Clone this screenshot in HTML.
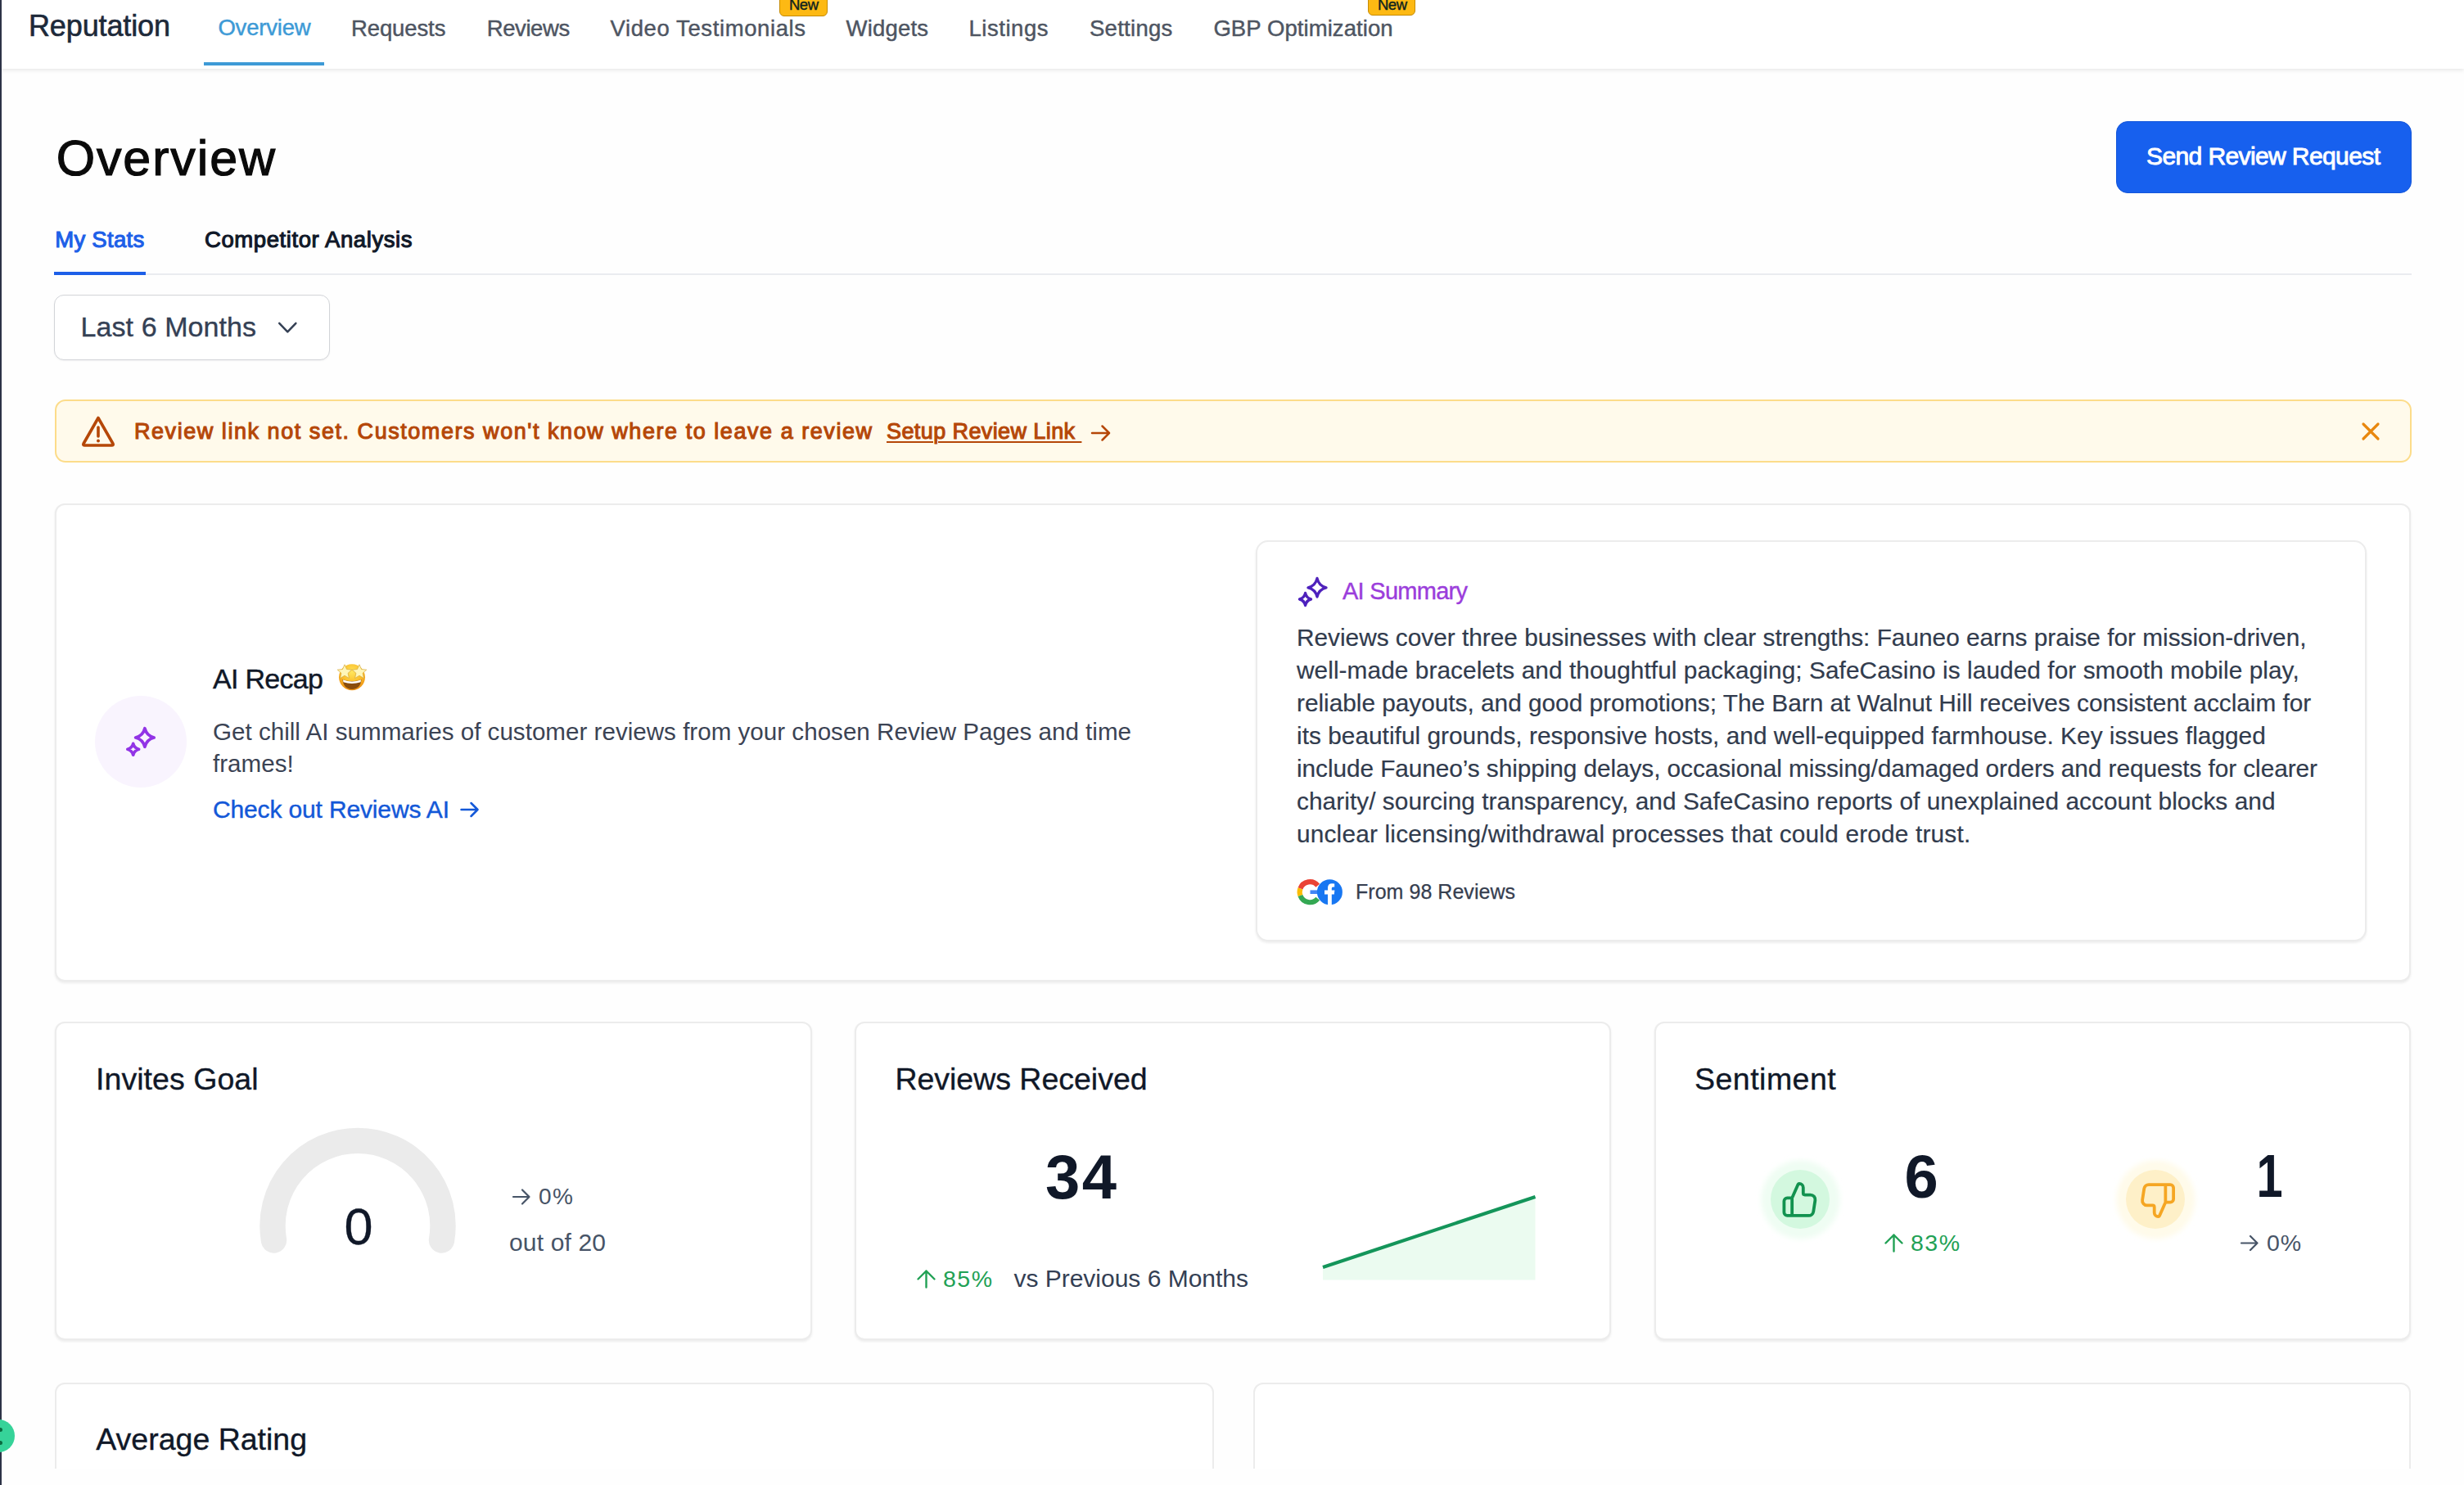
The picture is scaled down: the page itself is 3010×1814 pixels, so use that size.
<!DOCTYPE html>
<html><head><meta charset="utf-8"><title>Reputation Overview</title>
<style>
html,body{margin:0;padding:0;width:3010px;height:1814px;overflow:hidden;background:#fefefe;}
body{position:relative;font-family:"Liberation Sans", sans-serif;}
.t{position:absolute;white-space:pre;line-height:1;}
.a{position:absolute;box-sizing:border-box;}
svg{position:absolute;overflow:visible;}
</style></head><body>
<!-- left dark border -->
<div class="a" style="left:0;top:0;width:2px;height:1814px;background:#2d3347;z-index:5"></div>
<!-- header -->
<div class="a" style="left:0;top:0;width:3010px;height:84px;background:#fff;box-shadow:0 2px 5px rgba(0,0,0,0.09);"></div>
<div class="a" style="left:249px;top:76px;width:147px;height:4px;background:#3d9ad6;"></div>
<div class="a" style="left:952px;top:-8px;width:59px;height:27.5px;background:#fdb913;border:1.5px solid #c58b05;border-radius:6px;"></div>
<div class="a" style="left:1671px;top:-8px;width:57.5px;height:27px;background:#fdb913;border:1.5px solid #c58b05;border-radius:6px;"></div>

<!-- send button -->
<div class="a" style="left:2585px;top:148px;width:361px;height:88px;background:#1760ee;border-radius:14px;border:1px solid #1456da;"></div>

<!-- tabs -->
<div class="a" style="left:66px;top:334px;width:2880px;height:2px;background:#eaecf0;"></div>
<div class="a" style="left:66px;top:332px;width:112px;height:4px;background:#1d5fe8;"></div>

<!-- dropdown -->
<div class="a" style="left:66px;top:360px;width:337px;height:80px;border:1.6px solid #d2d4d8;border-radius:12px;background:#fff;box-shadow:0 1px 2px rgba(16,24,40,0.05);"></div>
<svg style="left:339px;top:389px" width="24" height="20" viewBox="0 0 24 20"><path d="M2.2 5.8 L12.3 16.4 L22.4 5.8" fill="none" stroke="#344054" stroke-width="2.5" stroke-linecap="round" stroke-linejoin="round"/></svg>

<!-- alert -->
<div class="a" style="left:67px;top:488px;width:2879px;height:77px;border:2px solid #fcdc8a;border-radius:13px;background:#fffaeb;"></div>
<svg style="left:98px;top:507px" width="44" height="40" viewBox="0 0 44 40"><path d="M22 3.5 L40 35 Q41 37 38.5 37 L5.5 37 Q3 37 4 35 Z" fill="none" stroke="#b54708" stroke-width="3.6" stroke-linejoin="round"/><path d="M22 15 V26" stroke="#b54708" stroke-width="3.6" stroke-linecap="round"/><circle cx="22" cy="31.5" r="2" fill="#b54708"/></svg>
<svg style="left:1331px;top:517px" width="28" height="24" viewBox="0 0 28 24"><path d="M3 12 H24 M15.5 3.5 L24 12 L15.5 20.5" fill="none" stroke="#b54708" stroke-width="2.5" stroke-linecap="round" stroke-linejoin="round"/></svg>
<svg style="left:2884px;top:515px" width="24" height="24" viewBox="0 0 24 24"><path d="M3 3 L21 21 M21 3 L3 21" fill="none" stroke="#e8870e" stroke-width="3.2" stroke-linecap="round"/></svg>

<!-- AI recap card -->
<div class="a" style="left:67px;top:615px;width:2878px;height:584px;border:2px solid #ececec;border-radius:12px;background:#fff;box-shadow:0 2px 3px rgba(0,0,0,0.07);"></div>
<div class="a" style="left:116px;top:850px;width:112px;height:112px;border-radius:50%;background:#f9f4fe;"></div>
<svg style="left:150px;top:883px" width="44" height="44" viewBox="0 0 44 44">
<path d="M26.90 6.70 Q29.16 15.74 38.20 18.00 Q29.16 20.26 26.90 29.30 Q24.64 20.26 15.60 18.00 Q24.64 15.74 26.90 6.70 Z" fill="none" stroke="#9234e6" stroke-width="3.7" stroke-linejoin="round"/>
<path d="M12.70 25.40 Q14.08 30.92 19.60 32.30 Q14.08 33.68 12.70 39.20 Q11.32 33.68 5.80 32.30 Q11.32 30.92 12.70 25.40 Z" fill="none" stroke="#9234e6" stroke-width="3.7" stroke-linejoin="round"/>
</svg>
<!-- emoji star-struck -->
<svg style="left:411px;top:809px" width="38" height="38" viewBox="0 0 38 38">
<defs><radialGradient id="eg" cx="50%" cy="30%" r="70%"><stop offset="0" stop-color="#ffe65c"/><stop offset="0.55" stop-color="#fbbf2c"/><stop offset="1" stop-color="#ec8f12"/></radialGradient></defs>
<circle cx="19" cy="18.3" r="16" fill="url(#eg)"/>
<path d="M7.5 21 Q19 25.5 30.5 21 Q29.5 32.5 19 33 Q8.5 32.5 7.5 21 Z" fill="#8a4d0c"/>
<path d="M8 21.2 Q19 25.6 30 21.2 L29.6 24.2 Q19 27.6 8.4 24.2 Z" fill="#ffffff"/>
<path d="M10.00 2.80 L12.53 8.52 L18.75 9.16 L14.09 13.33 L15.41 19.44 L10.00 16.30 L4.59 19.44 L5.91 13.33 L1.25 9.16 L7.47 8.52 Z" fill="#fff6b8" stroke="#d6a73a" stroke-width="0.7" stroke-linejoin="round"/>
<path d="M28.00 2.80 L30.53 8.52 L36.75 9.16 L32.09 13.33 L33.41 19.44 L28.00 16.30 L22.59 19.44 L23.91 13.33 L19.25 9.16 L25.47 8.52 Z" fill="#fff6b8" stroke="#d6a73a" stroke-width="0.7" stroke-linejoin="round"/>
</svg>
<svg style="left:560px;top:976px" width="28" height="26" viewBox="0 0 28 26"><path d="M3.5 13 H23.5 M15.5 5 L23.5 13 L15.5 21" fill="none" stroke="#1358d8" stroke-width="2.5" stroke-linecap="round" stroke-linejoin="round"/></svg>

<!-- AI summary card -->
<div class="a" style="left:1534px;top:660px;width:1357px;height:490px;border:2px solid #ececec;border-radius:15px;background:#fff;box-shadow:0 2px 3px rgba(0,0,0,0.07);"></div>
<svg style="left:1582px;top:702px" width="42" height="42" viewBox="0 0 42 42">
<defs><linearGradient id="sg" x1="0" y1="1" x2="1" y2="0"><stop offset="0" stop-color="#4a1fc0"/><stop offset="1" stop-color="#5324b8"/></linearGradient></defs>
<path d="M27 4.5 Q29 13.5 38 15.8 Q29 18 27 27 Q25 18 16 15.8 Q25 13.5 27 4.5 Z" fill="none" stroke="url(#sg)" stroke-width="3.4" stroke-linejoin="round"/>
<path d="M12.6 22.5 Q13.8 28.5 19.5 30 Q13.8 31.5 12.6 37.5 Q11.4 31.5 5.5 30 Q11.4 28.5 12.6 22.5 Z" fill="none" stroke="url(#sg)" stroke-width="3.4" stroke-linejoin="round"/>
</svg>
<!-- google + facebook -->
<svg style="left:1583px;top:1073px" width="58" height="34" viewBox="0 0 58 34">
<g transform="translate(17.2 16.7)">
<path d="M9.58 -8.03 A12.5 12.5 0 0 0 -11.75 -4.28" fill="none" stroke="#ea4335" stroke-width="6.2"/>
<path d="M-11.75 -4.28 A12.5 12.5 0 0 0 -11.75 4.28" fill="none" stroke="#fbbc05" stroke-width="6.2"/>
<path d="M-11.75 4.28 A12.5 12.5 0 0 0 9.58 8.03" fill="none" stroke="#34a853" stroke-width="6.2"/>
<rect x="0.3" y="-2.3" width="10" height="4.6" fill="#4285f4"/>
</g>
<circle cx="41.4" cy="16.7" r="15.5" fill="#1877f2"/>
<path d="M39 34 V19.5 H35 V14.5 H39 V11.5 Q39 6.2 44.3 6.2 Q46 6.2 47.2 6.5 V10.5 H45.2 Q43.8 10.5 43.8 12 V14.5 H47.4 L46.8 19.5 H43.8 V34 Z" fill="#fff"/>
</svg>

<!-- stats cards -->
<div class="a" style="left:67px;top:1248px;width:925px;height:389px;border:2px solid #ececec;border-radius:12px;background:#fff;box-shadow:0 2px 3px rgba(0,0,0,0.07);"></div>
<div class="a" style="left:1044px;top:1248px;width:924px;height:389px;border:2px solid #ececec;border-radius:12px;background:#fff;box-shadow:0 2px 3px rgba(0,0,0,0.07);"></div>
<div class="a" style="left:2021px;top:1248px;width:924px;height:389px;border:2px solid #ececec;border-radius:12px;background:#fff;box-shadow:0 2px 3px rgba(0,0,0,0.07);"></div>
<svg style="left:0;top:0" width="3010" height="1814" viewBox="0 0 3010 1814">
<path d="M334.5 1515 A104 104 0 1 1 539.5 1515" fill="none" stroke="#ebebeb" stroke-width="31.4" stroke-linecap="round"/>
<!-- arrows small -->
<path d="M627 1462 H646.5 M638 1453.5 L646.5 1462 L638 1470.5" fill="none" stroke="#475467" stroke-width="2.2" stroke-linecap="round" stroke-linejoin="round"/>
<path d="M1131.5 1572.5 V1552.5 M1121.5 1562.5 L1131.5 1552.5 L1141.5 1562.5" fill="none" stroke="#22a155" stroke-width="2.4" stroke-linecap="round" stroke-linejoin="round"/>
<path d="M2313.5 1528.5 V1508.5 M2303.5 1518.5 L2313.5 1508.5 L2323.5 1518.5" fill="none" stroke="#22a155" stroke-width="2.4" stroke-linecap="round" stroke-linejoin="round"/>
<path d="M2738 1518.5 H2757.5 M2749 1510 L2757.5 1518.5 L2749 1527" fill="none" stroke="#475467" stroke-width="2.2" stroke-linecap="round" stroke-linejoin="round"/>
<!-- chart -->
<path d="M1616 1548 L1875.5 1462 L1875.5 1563.5 L1616 1563.5 Z" fill="#ebfbf0"/>
<path d="M1616 1548 L1875.5 1462" fill="none" stroke="#14955a" stroke-width="4.2"/>
<!-- thumbs -->
<circle cx="2199.5" cy="1465.5" r="48" fill="#effdf3" filter="url(#blur)"/>
<circle cx="2199" cy="1465" r="36" fill="#d3f8df"/>
<circle cx="2633.5" cy="1465.5" r="48" fill="#fffbea" filter="url(#blur)"/>
<circle cx="2633" cy="1465" r="36" fill="#fef0c8"/>
<defs><filter id="blur" x="-30%" y="-30%" width="160%" height="160%"><feGaussianBlur stdDeviation="3"/></filter></defs>
<g transform="translate(2175.5 1442) scale(1.95)"><path d="M7 22V11M2 13v7a2 2 0 0 0 2 2h13.43a3 3 0 0 0 2.96-2.54l1.08-7A3 3 0 0 0 18.5 9H15a1 1 0 0 1-1-1V4.47A2.47 2.47 0 0 0 11.53 2a.81.81 0 0 0-.75.49L7.26 10.41a1 1 0 0 1-.91.59H4a2 2 0 0 0-2 2Z" fill="none" stroke="#12924f" stroke-width="1.95" stroke-linecap="round" stroke-linejoin="round"/></g>
<g transform="translate(2659 1490) scale(-1.95 -1.95) translate(0 0)"><path d="M7 22V11M2 13v7a2 2 0 0 0 2 2h13.43a3 3 0 0 0 2.96-2.54l1.08-7A3 3 0 0 0 18.5 9H15a1 1 0 0 1-1-1V4.47A2.47 2.47 0 0 0 11.53 2a.81.81 0 0 0-.75.49L7.26 10.41a1 1 0 0 1-.91.59H4a2 2 0 0 0-2 2Z" fill="none" stroke="#f5a623" stroke-width="1.95" stroke-linecap="round" stroke-linejoin="round"/></g>
</svg>

<!-- bottom cards (clipped) -->
<div class="a" style="left:0;top:0;width:3010px;height:1794px;overflow:hidden;pointer-events:none;">
<div class="a" style="left:67px;top:1689px;width:1416px;height:300px;border:2px solid #ececec;border-radius:12px;background:#fff;"></div>
<div class="a" style="left:1531px;top:1689px;width:1414px;height:300px;border:2px solid #ececec;border-radius:12px;background:#fff;"></div>
</div>
<!-- green help bubble -->
<div class="a" style="left:-22.5px;top:1733.7px;width:40.4px;height:40.4px;border-radius:50%;background:#36d399;z-index:6"></div>
<div class="a" style="left:-2px;top:1743.5px;width:5px;height:5px;border-radius:50%;background:#0b6b40;z-index:7"></div>
<div class="a" style="left:-2px;top:1759.5px;width:5px;height:5px;border-radius:50%;background:#0b6b40;z-index:7"></div>

<div class=t style="left:35.0px;top:13.5px;font-size:36px;font-weight:400;color:#1d2939;letter-spacing:-0.127px;-webkit-text-stroke:0.6px #1d2939;">Reputation</div>
<div class=t style="left:266.4px;top:19.7px;font-size:27.5px;font-weight:400;color:#3d9ad6;letter-spacing:-0.201px;-webkit-text-stroke:0.45px #3d9ad6;">Overview</div>
<div class=t style="left:429.0px;top:21.3px;font-size:27.5px;font-weight:400;color:#4e5562;letter-spacing:-0.112px;-webkit-text-stroke:0.45px #4e5562;">Requests</div>
<div class=t style="left:594.7px;top:21.3px;font-size:27.5px;font-weight:400;color:#4e5562;letter-spacing:-0.404px;-webkit-text-stroke:0.45px #4e5562;">Reviews</div>
<div class=t style="left:745.5px;top:21.3px;font-size:27.5px;font-weight:400;color:#4e5562;letter-spacing:0.600px;-webkit-text-stroke:0.45px #4e5562;">Video Testimonials</div>
<div class=t style="left:1033.5px;top:21.3px;font-size:27.5px;font-weight:400;color:#4e5562;letter-spacing:0.193px;-webkit-text-stroke:0.45px #4e5562;">Widgets</div>
<div class=t style="left:1183.5px;top:21.3px;font-size:27.5px;font-weight:400;color:#4e5562;letter-spacing:0.536px;-webkit-text-stroke:0.45px #4e5562;">Listings</div>
<div class=t style="left:1331.0px;top:21.3px;font-size:27.5px;font-weight:400;color:#4e5562;letter-spacing:0.275px;-webkit-text-stroke:0.45px #4e5562;">Settings</div>
<div class=t style="left:1482.4px;top:21.3px;font-size:27.5px;font-weight:400;color:#4e5562;letter-spacing:0.076px;-webkit-text-stroke:0.45px #4e5562;">GBP Optimization</div>
<div class=t style="left:964.0px;top:-3.0px;font-size:18.5px;font-weight:400;color:#10231f;letter-spacing:-0.508px;-webkit-text-stroke:0.4px #10231f;">New</div>
<div class=t style="left:1683.0px;top:-3.0px;font-size:18.5px;font-weight:400;color:#10231f;letter-spacing:-0.508px;-webkit-text-stroke:0.4px #10231f;">New</div>
<div class=t style="left:68.7px;top:162.9px;font-size:61px;font-weight:400;color:#0a0a0a;letter-spacing:1.869px;-webkit-text-stroke:1.2px #0a0a0a;">Overview</div>
<div class=t style="left:2622.0px;top:176.4px;font-size:30px;font-weight:400;color:#ffffff;letter-spacing:-0.602px;-webkit-text-stroke:0.9px #ffffff;">Send Review Request</div>
<div class=t style="left:67.2px;top:278.5px;font-size:27.5px;font-weight:400;color:#1d5fe8;letter-spacing:0.290px;-webkit-text-stroke:1.1px #1d5fe8;">My Stats</div>
<div class=t style="left:250.0px;top:278.5px;font-size:27.5px;font-weight:400;color:#101828;letter-spacing:0.582px;-webkit-text-stroke:1.1px #101828;">Competitor Analysis</div>
<div class=t style="left:98.6px;top:381.8px;font-size:34px;font-weight:400;color:#344054;letter-spacing:0.070px;-webkit-text-stroke:0.35px #344054;">Last 6 Months</div>
<div class=t style="left:164.0px;top:514.1px;font-size:27px;font-weight:400;color:#b54708;letter-spacing:1.547px;-webkit-text-stroke:1.1px #b54708;">Review link not set. Customers won't know where to leave a review</div>
<div class=t style="left:1083.0px;top:514.1px;font-size:27px;font-weight:400;color:#b54708;letter-spacing:0.404px;-webkit-text-stroke:1.1px #b54708;text-decoration:underline;text-underline-offset:3px;text-decoration-thickness:2.4px;">Setup Review Link </div>
<div class=t style="left:260.0px;top:811.7px;font-size:34px;font-weight:400;color:#101828;letter-spacing:-0.694px;-webkit-text-stroke:0.4px #101828;">AI Recap</div>
<div class=t style="left:260.0px;top:878.5px;font-size:29.6px;font-weight:400;color:#3b4354;letter-spacing:0.004px;">Get chill AI summaries of customer reviews from your chosen Review Pages and time</div>
<div class=t style="left:260.0px;top:918.3px;font-size:29.6px;font-weight:400;color:#3b4354;letter-spacing:0.000px;">frames!</div>
<div class=t style="left:260.0px;top:974.3px;font-size:30px;font-weight:400;color:#1358d8;letter-spacing:-0.147px;-webkit-text-stroke:0.4px #1358d8;">Check out Reviews AI</div>
<div class=t style="left:1640.0px;top:707.7px;font-size:29px;font-weight:400;color:#9b3ddb;letter-spacing:-0.726px;-webkit-text-stroke:0.4px #9b3ddb;">AI Summary</div>
<div class=t style="left:1584.0px;top:764.3px;font-size:29.8px;font-weight:400;color:#313b4d;letter-spacing:-0.003px;-webkit-text-stroke:0.2px #313b4d;">Reviews cover three businesses with clear strengths: Fauneo earns praise for mission-driven,</div>
<div class=t style="left:1584.0px;top:804.3px;font-size:29.8px;font-weight:400;color:#313b4d;letter-spacing:0.069px;-webkit-text-stroke:0.2px #313b4d;">well-made bracelets and thoughtful packaging; SafeCasino is lauded for smooth mobile play,</div>
<div class=t style="left:1584.0px;top:844.3px;font-size:29.8px;font-weight:400;color:#313b4d;letter-spacing:-0.013px;-webkit-text-stroke:0.2px #313b4d;">reliable payouts, and good promotions; The Barn at Walnut Hill receives consistent acclaim for</div>
<div class=t style="left:1584.0px;top:884.3px;font-size:29.8px;font-weight:400;color:#313b4d;letter-spacing:0.032px;-webkit-text-stroke:0.2px #313b4d;">its beautiful grounds, responsive hosts, and well-equipped farmhouse. Key issues flagged</div>
<div class=t style="left:1584.0px;top:924.3px;font-size:29.8px;font-weight:400;color:#313b4d;letter-spacing:-0.070px;-webkit-text-stroke:0.2px #313b4d;">include Fauneo’s shipping delays, occasional missing/damaged orders and requests for clearer</div>
<div class=t style="left:1584.0px;top:964.3px;font-size:29.8px;font-weight:400;color:#313b4d;letter-spacing:0.059px;-webkit-text-stroke:0.2px #313b4d;">charity/ sourcing transparency, and SafeCasino reports of unexplained account blocks and</div>
<div class=t style="left:1584.0px;top:1004.3px;font-size:29.8px;font-weight:400;color:#313b4d;letter-spacing:0.191px;-webkit-text-stroke:0.2px #313b4d;">unclear licensing/withdrawal processes that could erode trust.</div>
<div class=t style="left:1656.0px;top:1076.6px;font-size:25px;font-weight:400;color:#363e4f;letter-spacing:0.036px;-webkit-text-stroke:0.25px #363e4f;">From 98 Reviews</div>
<div class=t style="left:117.0px;top:1299.9px;font-size:37.5px;font-weight:400;color:#101828;letter-spacing:0.053px;-webkit-text-stroke:0.35px #101828;">Invites Goal</div>
<div class=t style="left:1093.4px;top:1299.9px;font-size:37.5px;font-weight:400;color:#101828;letter-spacing:-0.018px;-webkit-text-stroke:0.35px #101828;">Reviews Received</div>
<div class=t style="left:2070.0px;top:1299.9px;font-size:37.5px;font-weight:400;color:#101828;letter-spacing:0.482px;-webkit-text-stroke:0.35px #101828;">Sentiment</div>
<div class=t style="left:420.5px;top:1466.7px;font-size:63px;font-weight:400;color:#101828;letter-spacing:0.000px;-webkit-text-stroke:0.3px #101828;">0</div>
<div class=t style="left:658.0px;top:1447.9px;font-size:28px;font-weight:400;color:#475467;letter-spacing:1.531px;">0%</div>
<div class=t style="left:622.0px;top:1502.6px;font-size:30px;font-weight:400;color:#475467;letter-spacing:0.154px;">out of 20</div>
<div class=t style="left:1277.0px;top:1399.7px;font-size:76px;font-weight:700;color:#101828;letter-spacing:2.453px;">34</div>
<div class=t style="left:1152.0px;top:1547.9px;font-size:28.5px;font-weight:400;color:#22a155;letter-spacing:1.477px;">85%</div>
<div class=t style="left:1238.4px;top:1546.6px;font-size:30px;font-weight:400;color:#344054;letter-spacing:-0.010px;">vs Previous 6 Months</div>
<div class=t style="left:2326.6px;top:1400.7px;font-size:74px;font-weight:700;color:#101828;letter-spacing:0.000px;">6</div>
<div class=t style="left:2334.0px;top:1503.9px;font-size:28.5px;font-weight:400;color:#22a155;letter-spacing:1.477px;">83%</div>
<div class=t style="left:2751.5px;top:1400.4px;font-size:74px;font-weight:700;color:#101828;letter-spacing:0.000px;transform:scaleX(0.78);transform-origin:50% 50%;">1</div>
<div class=t style="left:2769.0px;top:1503.9px;font-size:28.5px;font-weight:400;color:#475467;letter-spacing:0.797px;">0%</div>
<div class=t style="left:117.3px;top:1739.5px;font-size:37.5px;font-weight:400;color:#101828;letter-spacing:-0.009px;-webkit-text-stroke:0.35px #101828;">Average Rating</div>
</body></html>
